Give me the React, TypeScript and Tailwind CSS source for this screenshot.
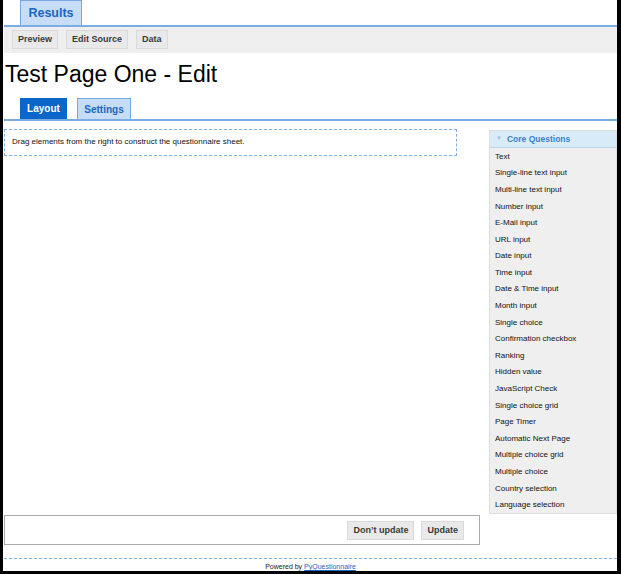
import React from 'react';

const questions = [
  'Text',
  'Single-line text input',
  'Multi-line text input',
  'Number input',
  'E-Mail input',
  'URL input',
  'Date input',
  'Time input',
  'Date & Time input',
  'Month input',
  'Single choice',
  'Confirmation checkbox',
  'Ranking',
  'Hidden value',
  'JavaScript Check',
  'Single choice grid',
  'Page Timer',
  'Automatic Next Page',
  'Multiple choice grid',
  'Multiple choice',
  'Country selection',
  'Language selection',
];

const GrayButton = ({ children }: { children: React.ReactNode }) => (
  <button className="h-[19px] px-[5px] bg-[#e9e9e9] border border-[#dadada] text-[9px] font-bold text-[#3a3a3a] leading-none">
    {children}
  </button>
);

const App = () => {
  return (
    <div
      className="w-[621px] h-[574px] overflow-hidden bg-white border-l-[3px] border-r-[4px] border-b-[3px] border-black flex flex-col"
      style={{ fontFamily: '"Liberation Sans", Arial, sans-serif' }}
    >
      {/* Results tab */}
      <div className="flex pl-[17px] pr-px h-[25px] items-end">
        <div className="w-[62px] h-[25px] bg-[#c7dcf7] border-x border-t border-[#77a8e0] flex items-center justify-center text-[12.5px] font-bold text-[#1a66c0]">
          Results
        </div>
      </div>
      <div className="h-[2px] ml-px bg-[#79ade3]" />

      {/* Toolbar */}
      <div className="h-[28px] ml-px bg-[#efefef] flex items-center gap-[8px] pl-[8px]">
        <GrayButton>Preview</GrayButton>
        <GrayButton>Edit Source</GrayButton>
        <GrayButton>Data</GrayButton>
      </div>

      {/* Title */}
      <h1 className="mt-[7px] ml-[2px] text-[23px] leading-[28px] text-black">Test Page One - Edit</h1>

      {/* Layout / Settings tabs */}
      <div className="mt-[10px] flex pl-[17px] gap-[10px] h-[21px] items-end">
        <div className="h-[21px] w-[47px] bg-[#0a66c8] flex items-center justify-center text-[10px] font-bold text-white">
          Layout
        </div>
        <div className="h-[21px] w-[54px] bg-[#c7dcf7] border border-b-0 border-[#77a8e0] flex items-center justify-center text-[10px] font-bold text-[#1a66c0]">
          Settings
        </div>
      </div>
      <div className="h-[2px] ml-px bg-[#79ade3]" />

      {/* Builder area */}
      <div className="flex mt-[7px] ml-px">
        <div className="w-[475px] pr-[22px]">
          <div className="h-[27px] mt-px border border-dashed border-[#7fb0e4] flex items-center pl-[7px] text-[8px] text-[#111]">
            Drag elements from the right to construct the questionnaire sheet.
          </div>
        </div>
        <div className="ml-[10px] w-[128px] mt-[2px] border border-[#dedede] bg-[#efefef]">
          <div className="h-[17px] bg-[#d8ebf9] border-b border-[#bcd8ee] flex items-center pl-[6px] gap-[5px] text-[8.5px] font-bold text-[#3d7fc4]">
            <span className="text-[6px] text-[#9cc3e6]">▼</span>
            Core Questions
          </div>
          {questions.map((q) => (
            <div key={q} className="h-[16.6px] flex items-center pl-[5px] pt-px text-[8px] text-[#111]">
              {q}
            </div>
          ))}
        </div>
      </div>

      {/* Update bar */}
      <div className="ml-px w-[476px] h-[32px] border border-[#aaa] flex items-center justify-end gap-[7px] pr-[15px] mt-px">
        <GrayButton>Don’t update</GrayButton>
        <GrayButton>Update</GrayButton>
      </div>

      {/* Footer */}
      <div className="mt-[13px] ml-px border-t border-dashed border-[#7fb0e4] flex-1 flex justify-center pt-[3px]">
        <span className="text-[7px] text-[#222] leading-[9px]">
          Powered by <a href="#" className="text-[#1a66c0] underline">PyQuestionnaire</a>
        </span>
      </div>
    </div>
  );
};

export default App;
